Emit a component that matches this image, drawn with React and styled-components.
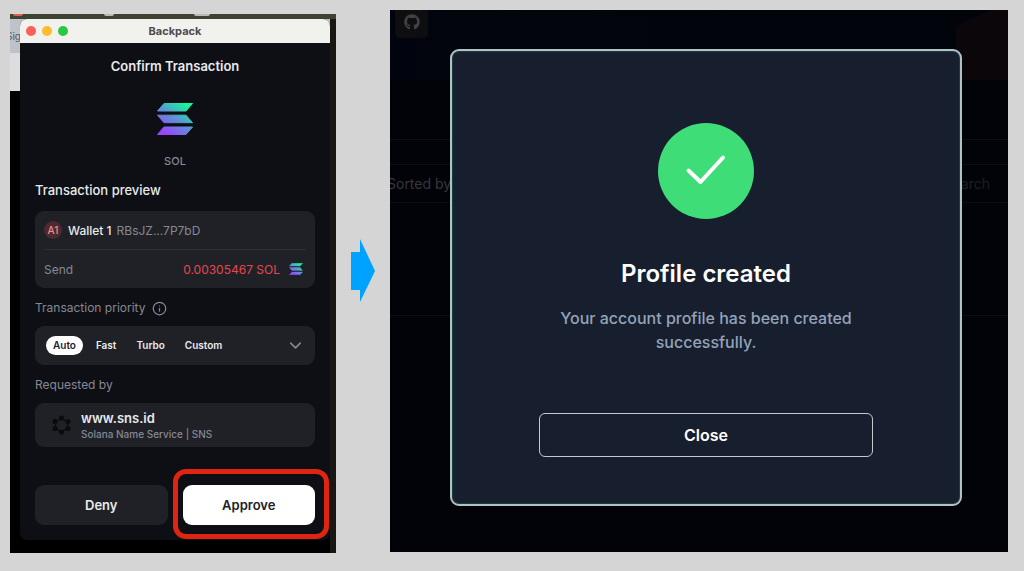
/* eslint-disable react/prop-types */
import React from 'react';
import styled, { createGlobalStyle } from 'styled-components';
import { FaGithub } from 'react-icons/fa';
import { ChevronDown, Info } from 'lucide-react';

const GlobalStyle = createGlobalStyle`
  * {
    box-sizing: border-box;
  }
  body {
    margin: 0;
    background: #d5d5d5;
    font-family: Inter, 'Liberation Sans', sans-serif;
  }
  h1, h2, h3, p {
    margin: 0;
  }
  button {
    font-family: inherit;
    cursor: pointer;
  }
`;

const Page = styled.main`
  display: grid;
  grid-template-columns: 326px 24px minmax(0, 1fr);
  gap: 15px;
  align-items: start;
  padding: 10px 16px 18px 10px;
`;

// desktop with the wallet window

const Desktop = styled.section`
  display: grid;
  margin-top: 4px;
  background: #000;
  overflow: hidden;
`;

const Wallpaper = styled.div`
  grid-area: 1 / 1;
  display: flex;
  flex-direction: column;
  border-right: 6px solid #1a1712;
`;

const WallpaperTop = styled.div`
  display: flex;
  justify-content: space-between;
  height: 5px;
  margin-right: -6px;
  padding: 0 126px 0 3px;
  background: #3d4233;
`;

const Speck = styled.span`
  width: ${(props) => props.$width}px;
  height: 2px;
  border-radius: 0 0 4px 4px;
  background: ${(props) => props.$color};
`;

const TabStrip = styled.div`
  height: 34px;
  padding-top: 10px;
  background: #bfc3c9;
  color: #55585c;
  font-size: 10px;
  line-height: 14px;
`;

const TabName = styled.span`
  margin-left: -4px;
`;

const Toolbar = styled.div`
  height: 38px;
  background: #dcdddf;
`;

const Window = styled.article`
  grid-area: 1 / 1;
  margin: 5px 6px 13px 10px;
  border-radius: 7px;
  background: #0e0f14;
  overflow: hidden;
`;

const TitleBar = styled.header`
  display: grid;
  grid-template-columns: 1fr auto 1fr;
  align-items: center;
  height: 24px;
  padding: 0 6px;
  background: #f1f1ee;
`;

const Lights = styled.div`
  display: flex;
  gap: 6px;
`;

const Light = styled.span`
  width: 10px;
  height: 10px;
  border-radius: 50%;
  background: ${(props) => props.$color};
`;

const WindowTitle = styled.h1`
  color: #4b4b4b;
  font-size: 11px;
  font-weight: 700;
  line-height: 16px;
`;

const WindowBody = styled.div`
  display: flex;
  flex-direction: column;
  padding: 14px 15px 15px;
`;

const Heading = styled.h2`
  color: #e9eaec;
  font-size: 13px;
  font-weight: 600;
  line-height: 18px;
  text-align: center;
`;

const Token = styled.div`
  display: flex;
  flex-direction: column;
  align-items: center;
  gap: 18px;
  padding: 28px 0 12px;
  color: #858895;
  font-size: 11px;
  font-weight: 500;
  line-height: 16px;
`;

const SubHeading = styled.h3`
  color: #e9eaec;
  font-size: 13px;
  font-weight: 500;
  line-height: 18px;
`;

const Label = styled.div`
  display: flex;
  align-items: center;
  gap: 6px;
  margin: 12px 0 10px;
  color: #858895;
  font-size: 12px;
  font-weight: 400;
  line-height: 16px;
`;

const Card = styled.div`
  padding: 0 9px;
  border-radius: 9px;
  background: #202127;
`;

const PreviewCard = styled(Card)`
  margin-top: 12px;
`;

const Row = styled.div`
  display: flex;
  align-items: center;
  height: 38px;
  padding-right: 3px;
  color: #858895;
  font-size: 12px;
  font-weight: 400;
`;

const Divider = styled.hr`
  height: 1px;
  margin: 0;
  border: none;
  background: #2f3036;
`;

const Avatar = styled.span`
  width: 18px;
  height: 18px;
  margin-right: 6px;
  border-radius: 50%;
  background: #4b2a30;
  color: #f08a8e;
  font-size: 10px;
  font-weight: 500;
  line-height: 18px;
  text-align: center;
`;

const WalletName = styled.span`
  margin-right: 5px;
  color: #e9eaec;
  font-weight: 500;
`;

const Amount = styled.span`
  margin: 0 9px 0 auto;
  color: #e5484d;
`;

const PriorityCard = styled(Card)`
  display: flex;
  align-items: center;
  gap: 6px;
  padding: 10px 10px 10px 11px;
  color: #858895;

  svg {
    margin-left: auto;
  }
`;

const Pill = styled.button`
  height: 19px;
  padding: 0 7px;
  border: none;
  border-radius: 10px;
  background: ${(props) => (props.$active ? '#fff' : 'transparent')};
  color: ${(props) => (props.$active ? '#202127' : '#e9eaec')};
  font-size: 10px;
  font-weight: 600;
  line-height: 19px;
`;

const SiteCard = styled(Card)`
  display: flex;
  align-items: center;
  gap: 10px;
  padding: 6px 16px 6px 17px;
`;

const SiteName = styled.div`
  color: #e9eaec;
  font-size: 13px;
  font-weight: 600;
  line-height: 18px;
`;

const SiteInfo = styled.div`
  color: #858895;
  font-size: 10px;
  font-weight: 500;
  line-height: 14px;
`;

const Actions = styled.div`
  display: grid;
  grid-template-columns: 1fr 1fr;
  gap: 15px;
  margin-top: 38px;
`;

const ActionBtn = styled.button`
  width: 100%;
  height: 40px;
  border: none;
  border-radius: 9px;
  background: ${(props) => (props.$primary ? '#fff' : '#202127')};
  color: ${(props) => (props.$primary ? '#202127' : '#e9eaec')};
  font-size: 13px;
  font-weight: 600;
`;

const Marked = styled.div`
  position: relative;

  &::after {
    content: '';
    position: absolute;
    inset: -16px -14px -14px -10px;
    border: 5px solid #df2512;
    border-radius: 13px;
    pointer-events: none;
  }
`;

const Arrow = styled.svg`
  width: 24px;
  height: 64px;
  margin-top: 229px;
`;

// site with the dialog

const Site = styled.section`
  display: grid;
  background: #010308;
  overflow: hidden;
`;

const SiteContent = styled.div`
  grid-area: 1 / 1;
  min-width: 0;
`;

const Banner = styled.div`
  display: flex;
  align-items: flex-start;
  justify-content: space-between;
  height: 70px;
  margin-bottom: 59px;
  padding-left: 5px;
  background: linear-gradient(90deg, #01040f, #02050c 10%, #01040a 60%, #01040b);
`;

const GithubLink = styled.a`
  display: flex;
  align-items: center;
  justify-content: center;
  width: 33px;
  height: 28px;
  padding-bottom: 4px;
  border-radius: 0 0 5px 5px;
  background: #0e0e10;
  color: #414143;
`;

const BannerShape = styled.svg`
  width: 52px;
  height: 70px;
`;

const Line = styled.div`
  height: ${(props) => props.$height}px;
  border-top: 1px solid #0a0d12;
`;

const Filters = styled.div`
  display: flex;
  align-items: center;
  justify-content: space-between;
  height: 38px;
  padding-right: 18px;
  border-top: 1px solid #0a0d12;
  color: #36383c;
  font-size: 14px;
  line-height: 20px;
`;

const SortLabel = styled.span`
  margin-left: -3px;
`;

const SearchLabel = styled.span`
  color: #1c1f24;
`;

const Dialog = styled.div`
  grid-area: 1 / 1;
  z-index: 1;
  display: flex;
  flex-direction: column;
  align-items: center;
  margin: 39px 46px 46px 60px;
  padding: 72px 87px 47px;
  border: 2px solid #b0c3c4;
  border-radius: 9px;
  background: #171f2f;
  box-shadow: inset 0 0 1px 1px #1f3d44;
`;

const DialogTitle = styled.h2`
  margin-top: 39px;
  color: #fff;
  font-size: 24px;
  font-weight: 600;
  line-height: 32px;
`;

const DialogText = styled.p`
  margin-top: 16px;
  color: #94a3b8;
  font-size: 16px;
  font-weight: 500;
  line-height: 24px;
  text-align: center;
`;

const CloseBtn = styled.button`
  width: 100%;
  height: 44px;
  margin-top: 59px;
  border: 1px solid #c5c8cd;
  border-radius: 6px;
  background: transparent;
  color: #fff;
  font-size: 16px;
  font-weight: 600;
`;

const SolanaLogo = ({ id, width, height }) => (
  <svg width={width} height={height} viewBox="0 0 36 32" aria-hidden="true">
    <defs>
      <linearGradient id={id} gradientUnits="userSpaceOnUse" x1="6" y1="34" x2="30" y2="-2">
        <stop offset="0.1" stopColor="#9945ff" />
        <stop offset="0.5" stopColor="#5f8fd8" />
        <stop offset="0.9" stopColor="#19f39b" />
      </linearGradient>
    </defs>
    <g fill={`url(#${id})`} stroke={`url(#${id})`} strokeWidth="1" strokeLinejoin="round">
      <path d="M7 .5h28.5L29 8H.5z" />
      <path d="M.5 12.2H29l6.5 7.5H7z" />
      <path d="M7 24h28.5L29 31.5H.5z" />
    </g>
  </svg>
);

const SnsLogo = () => (
  <svg width="19" height="20" viewBox="0 0 19 20" aria-hidden="true">
    <path d="M9.500 3.500l6 3.300v6.600l-6 3.300-6-3.300V6.800z" fill="none" stroke="#0a0b0e" strokeWidth="1.200" />
    <g fill="#0a0b0e">
      <circle cx="9.500" cy="3" r="2.600" />
      <circle cx="16" cy="6.500" r="2.600" />
      <circle cx="16" cy="13.500" r="2.600" />
      <circle cx="9.500" cy="17" r="2.600" />
      <circle cx="3" cy="13.500" r="2.600" />
      <circle cx="3" cy="6.500" r="2.600" />
    </g>
  </svg>
);

const priorities = ['Auto', 'Fast', 'Turbo', 'Custom'];

const WalletWindow = () => {
  const [priority, setPriority] = React.useState('Auto');
  return (
    <Window>
      <TitleBar>
        <Lights>
          <Light $color="#fb5f57" />
          <Light $color="#fdbc2e" />
          <Light $color="#28c840" />
        </Lights>
        <WindowTitle>Backpack</WindowTitle>
      </TitleBar>
      <WindowBody>
        <Heading>Confirm Transaction</Heading>
        <Token>
          <SolanaLogo id="sol-large" width={36} height={32} />
          SOL
        </Token>
        <SubHeading>Transaction preview</SubHeading>
        <PreviewCard>
          <Row>
            <Avatar>A1</Avatar>
            <WalletName>Wallet 1</WalletName>
            <span>RBsJZ...7P7bD</span>
          </Row>
          <Divider />
          <Row>
            <span>Send</span>
            <Amount>0.00305467 SOL</Amount>
            <SolanaLogo id="sol-small" width={14} height={12} />
          </Row>
        </PreviewCard>
        <Label>
          Transaction priority
          <Info size={15} />
        </Label>
        <PriorityCard>
          {priorities.map((name) => (
            <Pill
              key={name}
              type="button"
              $active={name === priority}
              aria-pressed={name === priority}
              onClick={() => setPriority(name)}
            >
              {name}
            </Pill>
          ))}
          <ChevronDown size={19} />
        </PriorityCard>
        <Label>Requested by</Label>
        <SiteCard>
          <SnsLogo />
          <div>
            <SiteName>www.sns.id</SiteName>
            <SiteInfo>Solana Name Service | SNS</SiteInfo>
          </div>
        </SiteCard>
        <Actions>
          <ActionBtn type="button">Deny</ActionBtn>
          <Marked>
            <ActionBtn type="button" $primary>Approve</ActionBtn>
          </Marked>
        </Actions>
      </WindowBody>
    </Window>
  );
};

const ProfileDialog = () => (
  <Dialog role="dialog" aria-labelledby="dialog-title">
    <svg width="96" height="96" viewBox="0 0 96 96" aria-hidden="true">
      <circle cx="48" cy="48" r="48" fill="#3fdd78" />
      <path d="M30.5 47.5L42.500 59 65 34.500" fill="none" stroke="#fff" strokeWidth="4" strokeLinecap="round" strokeLinejoin="round" />
    </svg>
    <DialogTitle id="dialog-title">Profile created</DialogTitle>
    <DialogText>Your account profile has been created successfully.</DialogText>
    <CloseBtn type="button">Close</CloseBtn>
  </Dialog>
);

const App = () => (
  <>
    <GlobalStyle />
    <Page>
      <Desktop>
        <Wallpaper>
          <WallpaperTop>
            <Speck $width={10} $color="#e0604c" />
            <Speck $width={10} $color="#b9bbb4" />
            <Speck $width={16} $color="#b9bbb4" />
          </WallpaperTop>
          <TabStrip>
            <TabName>Sig</TabName>
          </TabStrip>
          <Toolbar />
        </Wallpaper>
        <WalletWindow />
      </Desktop>
      <Arrow viewBox="0 0 24 64" aria-hidden="true">
        <path d="M0 13h9V0l15 32L9 63V51H0z" fill="#00a2ff" />
      </Arrow>
      <Site>
        <SiteContent>
          <Banner>
            <GithubLink href="#github" aria-label="GitHub">
              <FaGithub size={16} />
            </GithubLink>
            <BannerShape viewBox="0 0 52 70" aria-hidden="true">
              <path d="M0 16L34 0h18v70H0z" fill="#0b060a" />
            </BannerShape>
          </Banner>
          <Line $height={25} />
          <Filters>
            <SortLabel>Sorted by</SortLabel>
            <SearchLabel>Search</SearchLabel>
          </Filters>
          <Line $height={113} />
          <Line $height={1} />
        </SiteContent>
        <ProfileDialog />
      </Site>
    </Page>
  </>
);

export default App;
